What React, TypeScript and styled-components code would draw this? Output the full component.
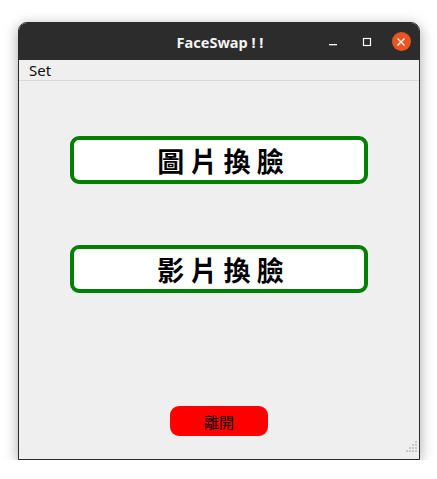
import React from "react";
import styled, { createGlobalStyle } from "styled-components";

const Global = createGlobalStyle`
  html, body { margin: 0; padding: 0; background: #ffffff; }
  body { font-family: "Noto Sans", "Noto Sans CJK TC", sans-serif; }
`;

const Page = styled.div`
  padding: 22px 0 0 18px;
`;

const Window = styled.div`
  width: 402px;
  height: 438px;
  box-sizing: border-box;
  display: flex;
  flex-direction: column;
  border: 1px solid #2b2b2b;
  border-radius: 9px 9px 0 0;
  background: #efefef;
  box-shadow: 0 3px 14px rgba(0, 0, 0, 0.35);
  overflow: hidden;
  position: relative;
`;

const TitleBar = styled.div`
  height: 37px;
  background: #2c2c2c;
  display: grid;
  grid-template-columns: 1fr auto 1fr;
  align-items: center;
`;

const Title = styled.div`
  grid-column: 2;
  color: #f4f4f4;
  font-family: "Noto Sans", sans-serif;
  font-weight: 700;
  font-size: 14.5px;
  padding-left: 2px;
`;

const Controls = styled.div`
  grid-column: 3;
  justify-self: end;
  display: flex;
  align-items: center;
  padding-right: 1px;
`;

const Ctrl = styled.div<{ $w: number }>`
  width: ${(p) => p.$w}px;
  height: 20px;
  display: flex;
  align-items: center;
  justify-content: center;
`;

const CloseCircle = styled.div`
  width: 19px;
  height: 19px;
  border-radius: 50%;
  background: #e95420;
  display: flex;
  align-items: center;
  justify-content: center;
`;

const MenuBar = styled.div`
  height: 21px;
  box-sizing: border-box;
  border-bottom: 1px solid #d8d8d8;
  display: flex;
  align-items: center;
  padding-left: 10px;
  font-family: "Noto Sans", sans-serif;
  font-size: 15px;
  color: #101010;
`;

const Content = styled.div`
  flex: 1;
  display: flex;
  flex-direction: column;
  align-items: center;
  padding-top: 55px;
`;

const BigButton = styled.button<{ $mt: number }>`
  margin-top: ${(p) => p.$mt}px;
  width: 298px;
  height: 48px;
  box-sizing: border-box;
  border: 4px solid #008000;
  border-radius: 9px;
  background: #ffffff;
  color: #000;
  font-family: "Noto Sans CJK TC", sans-serif;
  font-weight: 700;
  font-size: 27px;
  line-height: 1;
  padding: 0 0 0 3px;
  display: flex;
  align-items: center;
  justify-content: center;
  white-space: pre;
`;

const ExitButton = styled.button`
  margin-top: 113px;
  width: 98px;
  height: 30px;
  border: none;
  border-radius: 9px;
  background: #ff0000;
  color: #000;
  font-family: "Noto Sans CJK TC", sans-serif;
  font-size: 15px;
  padding: 0;
`;

const Grip = styled.div`
  position: absolute;
  right: 1px;
  bottom: 1px;
`;

export default function App() {
  return (
    <>
      <Global />
      <Page>
        <Window>
          <TitleBar>
            <Title>FaceSwap ! !</Title>
            <Controls>
              <Ctrl $w={34}>
                <svg width="10" height="10" viewBox="0 0 10 10">
                  <rect x="1" y="7" width="8" height="1.3" fill="#fff" />
                </svg>
              </Ctrl>
              <Ctrl $w={34}>
                <svg width="10" height="10" viewBox="0 0 10 10">
                  <rect x="1.5" y="1.5" width="7" height="7" fill="none" stroke="#fff" strokeWidth="1.2" />
                </svg>
              </Ctrl>
              <Ctrl $w={34}>
                <CloseCircle>
                  <svg width="10" height="10" viewBox="0 0 10 10">
                    <path d="M1.5 1.5 L8.5 8.5 M8.5 1.5 L1.5 8.5" stroke="#fff" strokeWidth="1.4" />
                  </svg>
                </CloseCircle>
              </Ctrl>
            </Controls>
          </TitleBar>
          <MenuBar>Set</MenuBar>
          <Content>
            <BigButton $mt={0}>{"圖 片 換 臉"}</BigButton>
            <BigButton $mt={61}>{"影 片 換 臉"}</BigButton>
            <ExitButton>離開</ExitButton>
          </Content>
          <Grip>
            <svg width="12" height="12" viewBox="0 0 12 12">
              {[
                [9, 0], [6, 3], [9, 3], [3, 6], [6, 6], [9, 6], [0, 9], [3, 9], [6, 9], [9, 9],
              ].map(([x, y], i) => (
                <rect key={i} x={x} y={y} width="2" height="2" fill="#c8c8c8" />
              ))}
            </svg>
          </Grip>
        </Window>
      </Page>
    </>
  );
}
